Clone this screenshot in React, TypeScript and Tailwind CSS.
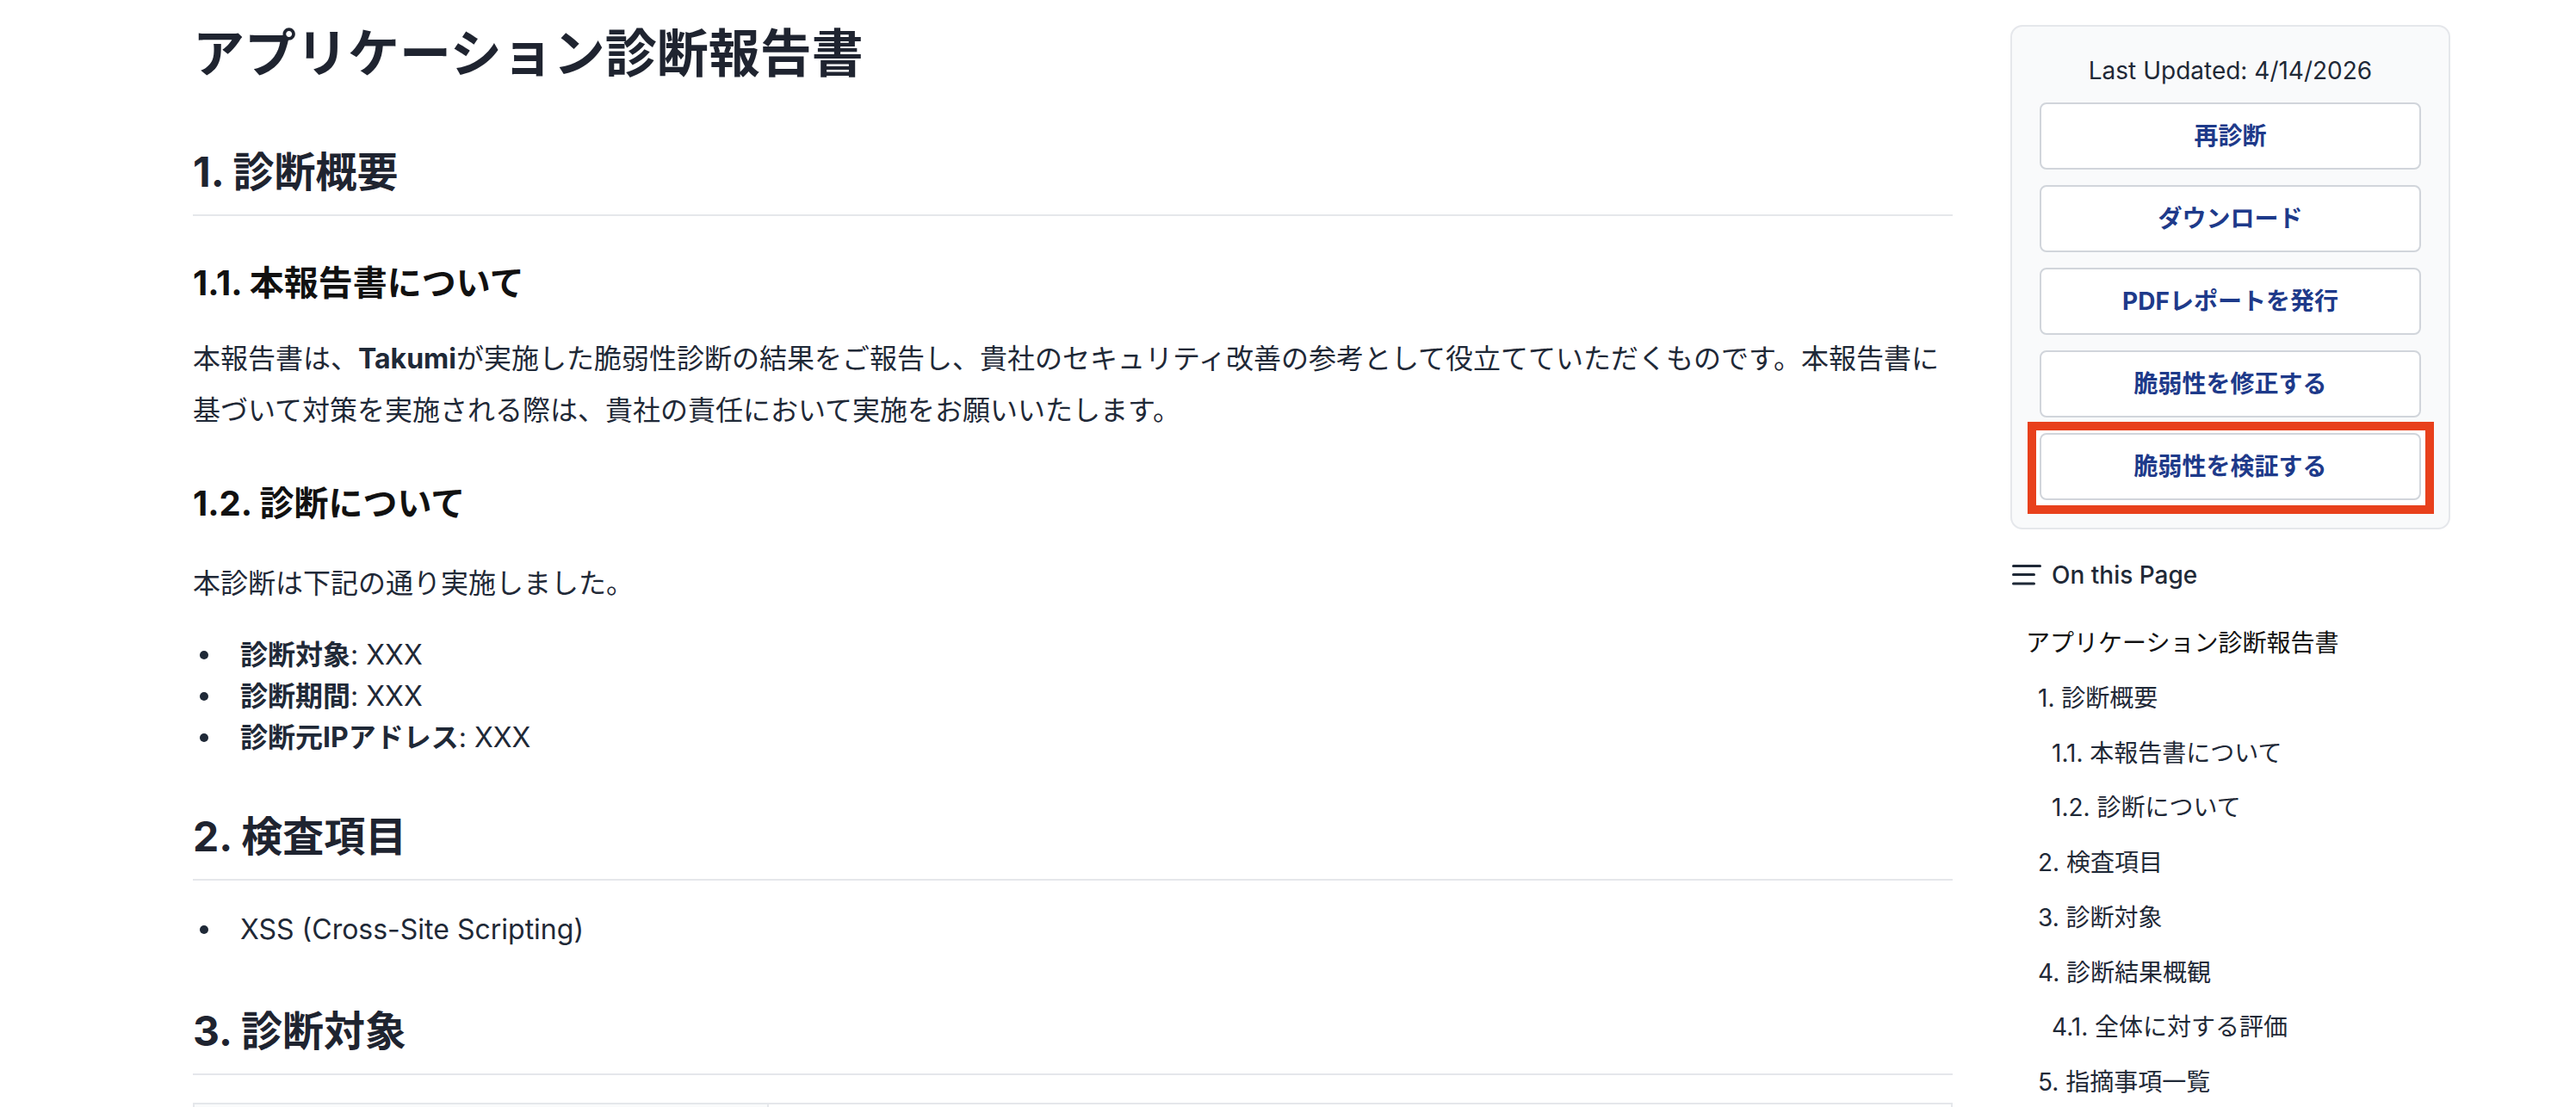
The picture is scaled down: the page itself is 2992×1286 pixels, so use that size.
import React from "react";

const toc: { label: string; level: number }[] = [
  { label: "アプリケーション診断報告書", level: 0 },
  { label: "1. 診断概要", level: 1 },
  { label: "1.1. 本報告書について", level: 2 },
  { label: "1.2. 診断について", level: 2 },
  { label: "2. 検査項目", level: 1 },
  { label: "3. 診断対象", level: 1 },
  { label: "4. 診断結果概観", level: 1 },
  { label: "4.1. 全体に対する評価", level: 2 },
  { label: "5. 指摘事項一覧", level: 1 },
];

function Bullet({ children }: { children: React.ReactNode }) {
  return (
    <li className="flex items-center leading-[48px]">
      <span className="ml-[8px] mr-[37px] h-[10px] w-[10px] shrink-0 rounded-full bg-[#1f2937]" />
      <span>{children}</span>
    </li>
  );
}

export default function App() {
  const buttons = ["再診断", "ダウンロード", "PDFレポートを発行", "脆弱性を修正する"];
  return (
    <div className="h-screen w-full overflow-hidden bg-white font-['Inter','Noto_Sans_CJK_JP',sans-serif] text-[#1f2937]">
      <div className="flex w-full gap-[67px] pl-[224px] pr-[146px]">
        <main className="min-w-0 flex-1 pt-[24px]">
          <h1 className="text-[60px] font-bold leading-[76px] text-[#1f2430]">
            アプリケーション診断報告書
          </h1>

          <h2 className="mt-[70px] border-b-2 border-[#e5e7eb] pb-[19px] text-[48px] font-bold leading-[60px] text-[#1f2430]">
            1. 診断概要
          </h2>

          <h3 className="mt-[53px] text-[40px] font-bold leading-[50px] text-[#111111]">
            1.1. 本報告書について
          </h3>
          <p className="mt-[33px] text-[32px] leading-[60px]">
            本報告書は、<b className="font-bold">Takumi</b>
            が実施した脆弱性診断の結果をご報告し、貴社のセキュリティ改善の参考として役立てていただくものです。本報告書に基づいて対策を実施される際は、貴社の責任において実施をお願いいたします。
          </p>

          <h3 className="mt-[53px] text-[40px] font-bold leading-[50px] text-[#111111]">
            1.2. 診断について
          </h3>
          <p className="mt-[38px] text-[32px] leading-[60px]">本診断は下記の通り実施しました。</p>
          <ul className="mt-[29px] text-[32px]">
            <Bullet>
              <b className="font-bold">診断対象</b>: XXX
            </Bullet>
            <Bullet>
              <b className="font-bold">診断期間</b>: XXX
            </Bullet>
            <Bullet>
              <b className="font-bold">診断元IPアドレス</b>: XXX
            </Bullet>
          </ul>

          <h2 className="mt-[61px] border-b-2 border-[#e5e7eb] pb-[19px] text-[48px] font-bold leading-[60px] text-[#1f2430]">
            2. 検査項目
          </h2>
          <ul className="mt-[33px] text-[32px]">
            <Bullet>XSS (Cross-Site Scripting)</Bullet>
          </ul>

          <h2 className="mt-[64px] border-b-2 border-[#e5e7eb] pb-[19px] text-[48px] font-bold leading-[60px] text-[#1f2430]">
            3. 診断対象
          </h2>
          <table className="mt-[32px] w-full border-collapse border-2 border-[#e5e7eb] text-[32px]">
            <tbody>
              <tr className="h-[72px]">
                <td className="w-[667px] border-2 border-[#e5e7eb] bg-[#f9fafb]"></td>
                <td className="border-2 border-[#e5e7eb]"></td>
              </tr>
            </tbody>
          </table>
        </main>

        <aside className="w-[511px] shrink-0 pt-[29px]">
          <div className="rounded-[14px] border-2 border-[#e5e7eb] bg-[#f9fafb] px-[32px] pb-[32px] pt-[31px]">
            <p className="text-center text-[28px] leading-[40px] text-[#1f2937]">
              Last Updated: 4/14/2026
            </p>
            <div className="mt-[17px] flex flex-col gap-[18px]">
              {buttons.map((b) => (
                <button
                  key={b}
                  className="flex h-[78px] w-full items-center justify-center rounded-[8px] border-2 border-[#d1d5db] bg-white text-[28px] font-bold text-[#1e3a8a]"
                >
                  {b}
                </button>
              ))}
              <div className="relative">
                <div className="absolute -bottom-[16px] -left-[14px] -right-[15px] -top-[13px] border-[10px] border-[#e8401c] bg-white" />
                <button className="relative flex h-[78px] w-full items-center justify-center rounded-[8px] border-2 border-[#d1d5db] bg-white text-[28px] font-bold text-[#1e3a8a]">
                  脆弱性を検証する
                </button>
              </div>
            </div>
          </div>

          <div className="mt-[33px] flex h-[40px] items-center gap-[12px]">
            <svg
              className="ml-[2px] shrink-0"
              width="34"
              height="24"
              viewBox="0 0 34 24"
              fill="none"
              stroke="#1f2937"
              strokeWidth="3"
              strokeLinecap="round"
            >
              <line x1="1.5" y1="1.5" x2="32.5" y2="1.5" />
              <line x1="1.5" y1="11.5" x2="25.5" y2="11.5" />
              <line x1="1.5" y1="22" x2="25.5" y2="22" />
            </svg>
            <span className="text-[28px] font-medium leading-[40px] text-[#1f2937]">On this Page</span>
          </div>

          <nav className="mt-[28px]">
            {toc.map((t) => (
              <div
                key={t.label}
                className={
                  "text-[28px] leading-[63.75px] " +
                  (t.level === 0
                    ? "pl-[18px] text-[#111111]"
                    : t.level === 1
                    ? "pl-[32px] text-[#1f2937]"
                    : "pl-[48px] text-[#1f2937]")
                }
              >
                {t.label}
              </div>
            ))}
          </nav>
        </aside>
      </div>
    </div>
  );
}
